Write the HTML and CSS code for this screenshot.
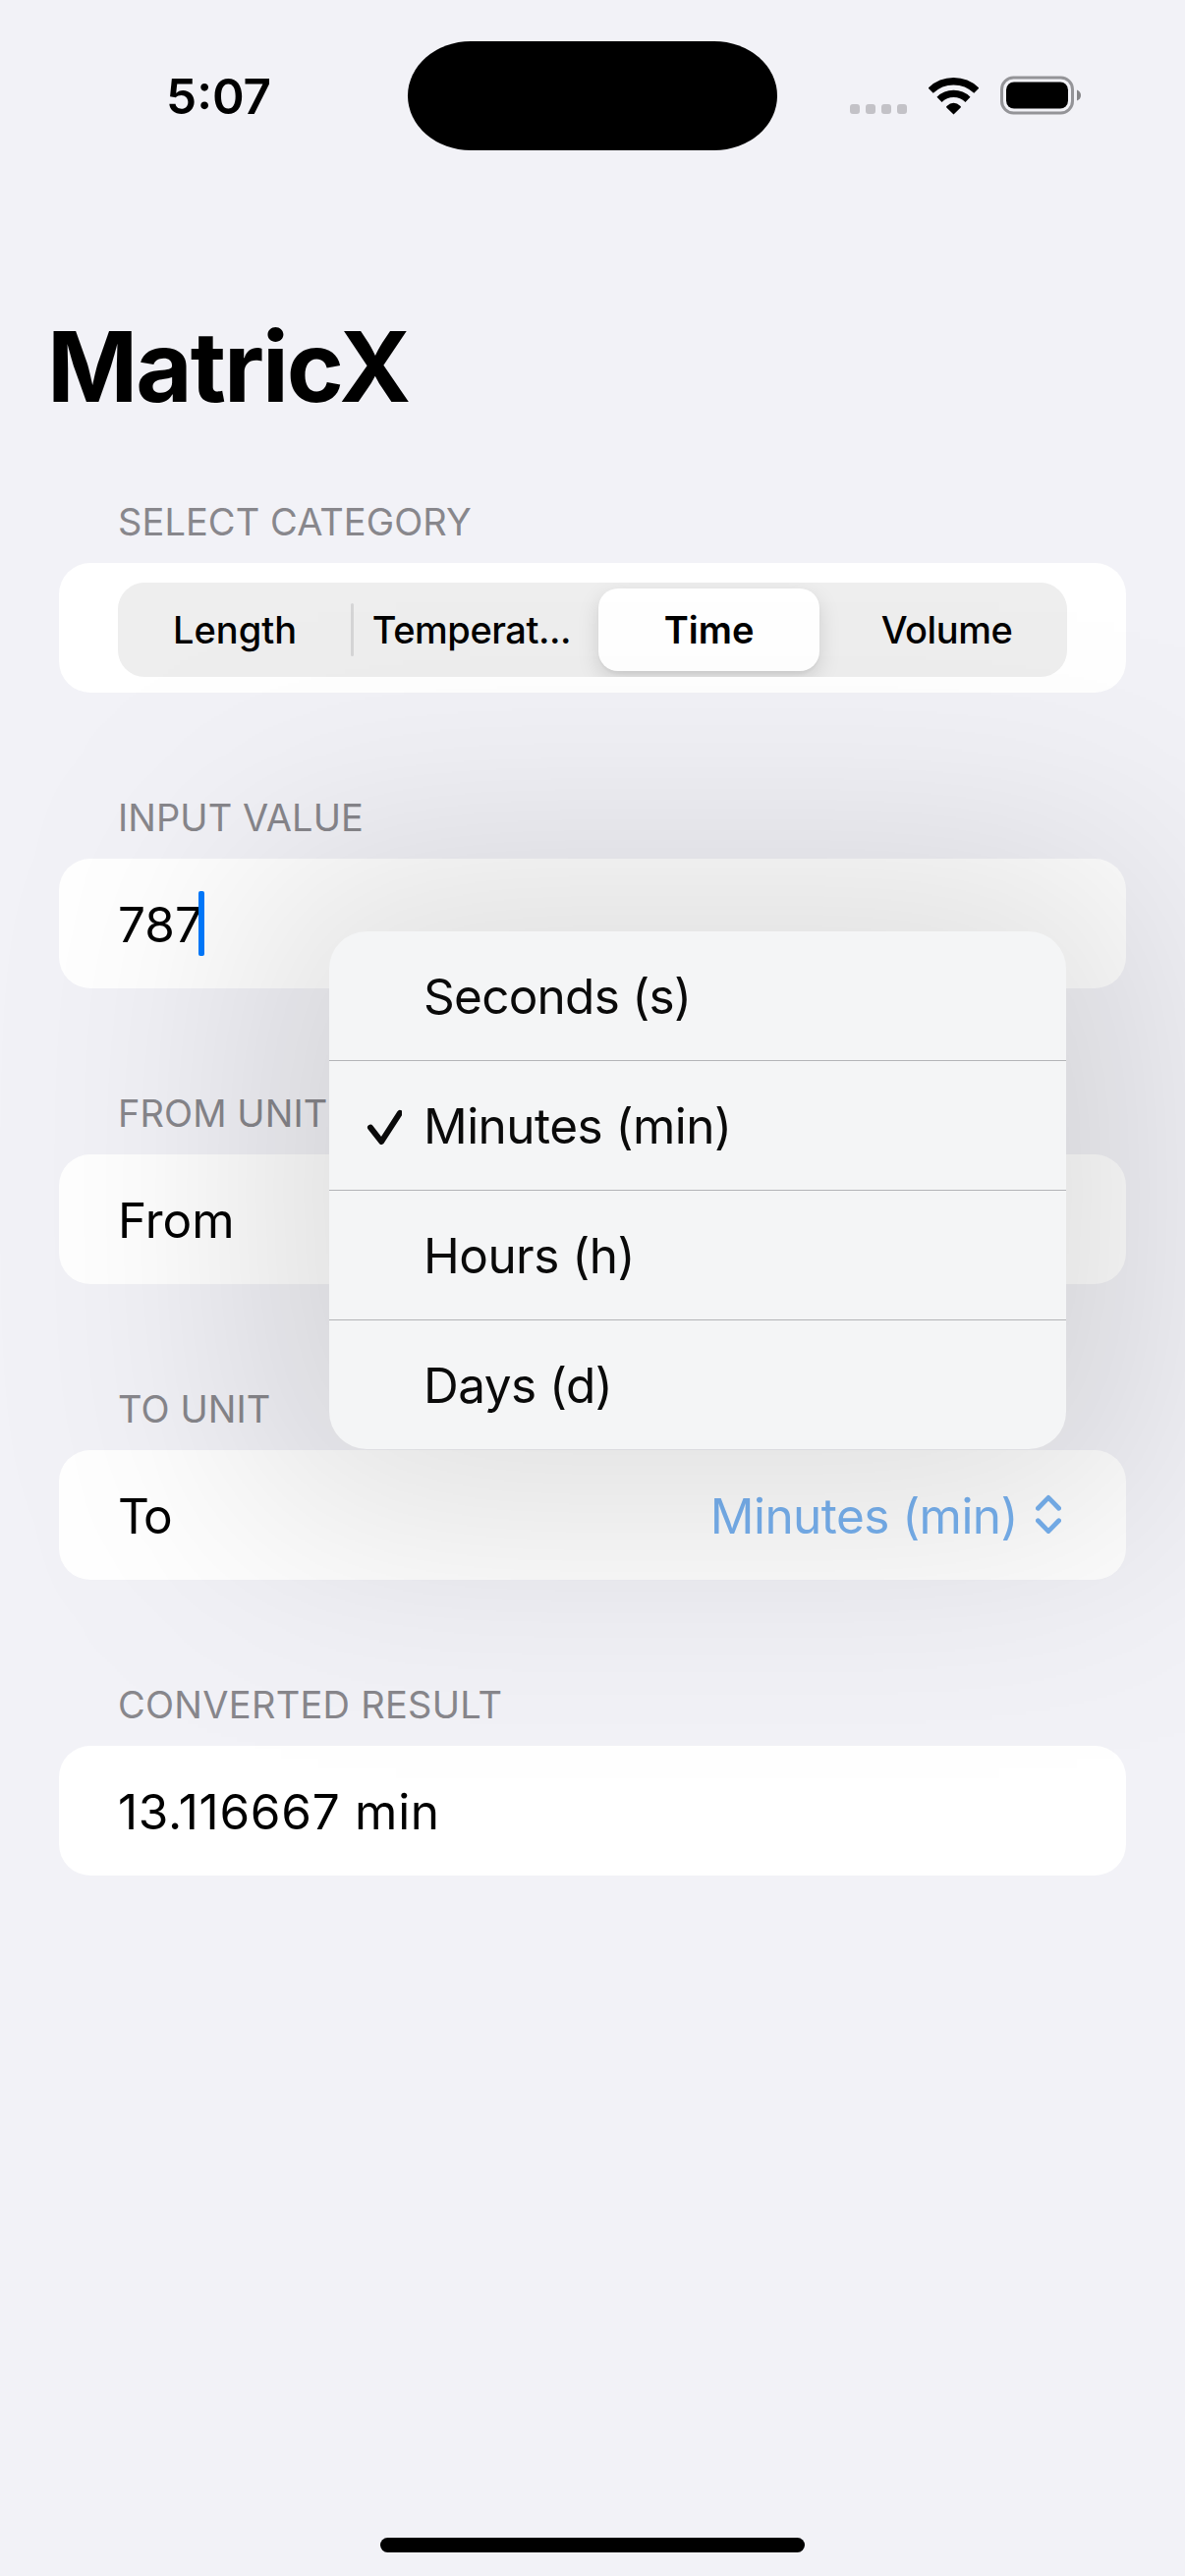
FILE: index.html
```
<!DOCTYPE html>
<html lang="en">
<head>
<meta charset="utf-8">
<title>MatricX</title>
<link rel="stylesheet" href="styles.css">
</head>
<body>
<div class="screen">
  <header class="status">
    <span class="status-time">5:07</span>
    <span class="island"></span>
    <div class="status-icons">
      <svg class="icon-signal" width="58" height="10" viewBox="0 0 58 10"><rect width="10" height="10" rx="3"/><rect x="16" width="10" height="10" rx="3"/><rect x="32" width="10" height="10" rx="3"/><rect x="48" width="10" height="10" rx="3"/></svg>
      <svg class="icon-wifi" width="51" height="38" viewBox="0 0 51 38"><path class="arc" d="M2.2 13.2A33.5 33.5 0 0 1 48.8 13.2M11 22.3A20.9 20.9 0 0 1 40 22.3"/><path d="M25.5 37.5L18.3 30.4Q17.7 29.6 18.5 28.9Q25.5 22.4 32.5 28.9Q33.3 29.6 32.7 30.4Z"/></svg>
      <svg class="icon-battery" width="82" height="40" viewBox="0 0 82 40"><rect class="shell" x="1.5" y="2" width="72" height="36" rx="12"/><rect x="6" y="6.5" width="63" height="27" rx="8"/><path class="nub" d="M78 14.5Q82 16 82 20Q82 24 78 25.5Z"/></svg>
    </div>
  </header>

  <h1 class="title">MatricX</h1>

  <main class="form">
    <section>
      <h2 class="caption">SELECT CATEGORY</h2>
      <div class="card card-segments">
        <div class="segments">
          <span class="segment">Length</span>
          <span class="segment segment-divided tight">Temperat...</span>
          <span class="segment"><span class="segment-active">Time</span></span>
          <span class="segment tight">Volume</span>
        </div>
      </div>
    </section>
    <section>
      <h2 class="caption">INPUT VALUE</h2>
      <div class="card"><span>787</span><i class="caret"></i></div>
    </section>
    <section>
      <h2 class="caption">FROM UNIT</h2>
      <div class="card"><span>From</span></div>
    </section>
    <section>
      <h2 class="caption">TO UNIT</h2>
      <div class="card">
        <span class="label-to">To</span>
        <span class="picker">Minutes (min)
          <svg width="26" height="40" viewBox="0 0 26 40"><path d="M2.4 14.2L13 3.4L23.6 14.2M2.4 26.8L13 37.6L23.6 26.8"/></svg>
        </span>
      </div>
    </section>
    <section>
      <h2 class="caption caption-wide">CONVERTED RESULT</h2>
      <div class="card"><span class="result">13.116667 min</span></div>
    </section>
  </main>

  <div class="menu-shadow"></div>
  <ul class="menu">
    <li class="first">Seconds (s)</li>
    <li><svg class="check" width="36" height="36" viewBox="0 0 36 36"><path d="M4 18.6L15.2 33L34 3.8"/></svg>Minutes (min)</li>
    <li>Hours (h)</li>
    <li>Days (d)</li>
  </ul>

  <div class="home-bar"></div>
</div>
</body>
</html>
```
FILE: styles.css
```
* { box-sizing: border-box; margin: 0; padding: 0; }

body {
  background: #f2f2f7;
  color: #000;
  font-family: Inter, "Liberation Sans", sans-serif;
  font-size: 49.5px;
}

.screen {
  position: relative;
  display: flex;
  flex-direction: column;
  width: 1206px;
  height: 2622px;
  overflow: hidden;
}

/* Status bar */
.status {
  display: flex;
  align-items: center;
  height: 194px;
  padding-left: 169px;
}
.status-time { width: 246px; font-weight: 600; line-height: 60px; padding-top: 2px; }
.island { width: 376px; height: 111px; border-radius: 64px / 55.5px; background: #000; }
.status-icons { display: flex; align-items: center; gap: 22px; margin-left: 74px; }
.icon-signal { fill: #c3c2c7; margin-top: 28px; }
.icon-wifi { margin-top: 1px; }
.arc { fill: none; stroke: #000; stroke-width: 7.3; }
.shell { fill: none; stroke: #949498; stroke-width: 3; }
.nub { fill: #858588; }

.title {
  margin: 119px 0 0 48px;
  font-size: 99px;
  line-height: 120px;
  font-weight: 700;
  letter-spacing: -2px;
}

/* Form */
.form {
  display: flex;
  flex-direction: column;
  gap: 103px;
  margin: 74px 60px 0;
}
.caption {
  padding: 0 60px 18px;
  color: #88878c;
  font-size: 38px;
  line-height: 48px;
  font-weight: 400;
  letter-spacing: 0.08px;
}
.caption-wide { letter-spacing: 0.28px; }
.card {
  display: flex;
  align-items: center;
  height: 132px;
  padding: 2px 66px 0 60px;
  border-radius: 32px;
  background: #fff;
}
.card-segments { padding: 20px 60px 16px; align-items: flex-start; }
.label-to { letter-spacing: -2px; }
.result { letter-spacing: 0.72px; }
.caret { width: 6px; height: 66px; margin: -2px 0 0 -4px; border-radius: 2px; background: #007aff; }

.segments {
  display: grid;
  grid-template-columns: 238px 244px 239px 245px;
  height: 96px;
  border-radius: 27px;
  background: #eeeeee;
  font-size: 38px;
  font-weight: 500;
  overflow: hidden;
}
.segment { position: relative; display: flex; align-items: center; justify-content: center; }
.segment-divided::before {
  content: "";
  position: absolute;
  left: -1px;
  top: 21px;
  width: 3px;
  height: 54px;
  border-radius: 2px;
  background: #d5d5d6;
}
.tight { letter-spacing: -0.45px; }
.segment-active {
  display: flex;
  align-items: center;
  justify-content: center;
  width: 225px;
  height: 84px;
  border-radius: 20px;
  background: #fff;
  box-shadow: 0 8px 22px rgba(0, 0, 0, 0.13), 0 3px 3px rgba(0, 0, 0, 0.04);
  font-weight: 600;
}

.picker {
  display: flex;
  align-items: center;
  gap: 18px;
  margin-left: auto;
  color: #78b2f0;
  letter-spacing: -0.57px;
}
.picker svg { fill: none; stroke: currentColor; stroke-width: 4.8; stroke-linecap: round; stroke-linejoin: round; margin-top: -4px; }

/* Wide soft shadow: one falloff curve per axis, multiplied together */
.menu-shadow {
  --falloff: transparent 0, rgb(0 0 0 / 0.01) 40px, rgb(0 0 0 / 0.029) 80px, rgb(0 0 0 / 0.062) 120px,
    rgb(0 0 0 / 0.116) 160px, rgb(0 0 0 / 0.19) 200px, rgb(0 0 0 / 0.3) 240px, rgb(0 0 0 / 0.42) 280px,
    rgb(0 0 0 / 0.58) 330px, rgb(0 0 0 / 0.7) 370px, rgb(0 0 0 / 0.8) 410px, rgb(0 0 0 / 0.877) 450px,
    rgb(0 0 0 / 0.93) 490px, rgb(0 0 0 / 0.964) 530px, rgb(0 0 0 / 0.983) 570px, #000 640px;
  position: absolute;
  left: -45px;
  top: 568px;
  width: 1510px;
  height: 1287px;
  background:
    rgba(0, 0, 0, 0.128);
  mask-image:
    linear-gradient(to right, var(--falloff)),
    linear-gradient(to left, var(--falloff)),
    linear-gradient(to bottom, var(--falloff)),
    linear-gradient(to top, var(--falloff));
  mask-composite: intersect;
}

/* Pop-up menu over the form */
.menu {
  position: absolute;
  left: 335px;
  top: 948px;
  width: 750px;
  list-style: none;
  border-radius: 38px;
  background: #f4f5f6;
  color: #0a0a0a;
  letter-spacing: -0.54px;
}
.menu li {
  display: flex;
  align-items: center;
  height: 132px;
  padding-left: 96px;
  border-top: 1px solid #b3b4b7;
}
.menu .first { height: 131px; border-top: 0; letter-spacing: -0.74px; }
.check {
  margin: 3px 22px 0 -58px;
  fill: none;
  stroke: currentColor;
  stroke-width: 6;
  stroke-linecap: round;
  stroke-linejoin: round;
}

.home-bar {
  width: 432px;
  height: 15px;
  margin: auto auto 24px;
  border-radius: 8px;
  background: #000;
}
```
